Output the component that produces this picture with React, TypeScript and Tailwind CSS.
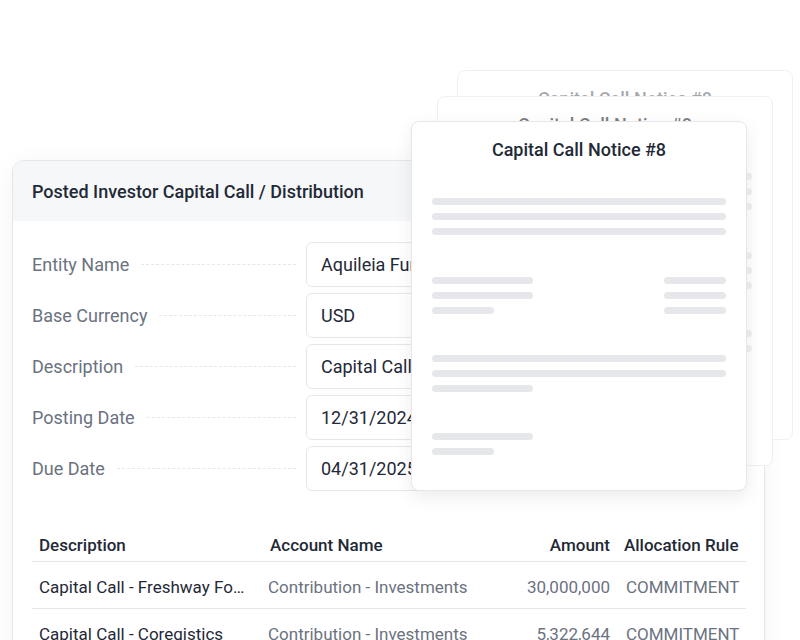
const FIELDS = [
  { label: 'Entity Name', value: 'Aquileia Fund I, L.P.' },
  { label: 'Base Currency', value: 'USD' },
  { label: 'Description', value: 'Capital Call #8' },
  { label: 'Posting Date', value: '12/31/2024' },
  { label: 'Due Date', value: '04/31/2025' },
];

const ROWS = [
  { desc: 'Capital Call - Freshway Foods', account: 'Contribution - Investments', amount: '30,000,000', rule: 'COMMITMENT' },
  { desc: 'Capital Call - Coregistics', account: 'Contribution - Investments', amount: '5,322,644', rule: 'COMMITMENT' },
];

function Bar({ w }: { w: string }) {
  return <div className={`h-[7px] rounded-full bg-[#e5e7eb] ${w}`} />;
}

function NoticeCard({ faded }: { faded?: 'light' | 'lighter' }) {
  const fade = faded === 'lighter' ? 'opacity-40' : faded === 'light' ? 'opacity-60' : '';
  return (
    <div
      className={`w-[336px] h-[370px] rounded-lg bg-white border ${
        faded ? 'border-[#eef0f2]' : 'border-[#e5e7eb] shadow-[0_6px_18px_rgba(0,0,0,0.08)]'
      }`}
    >
      <div className={`px-5 ${fade}`}>
        <div className="pt-[16px] text-center text-[18px] font-medium text-[#1f2a37] leading-6">
          Capital Call Notice #8
        </div>
        <div className="mt-[36px] flex flex-col gap-2">
          <Bar w="w-full" />
          <Bar w="w-full" />
          <Bar w="w-full" />
        </div>
        <div className="mt-[42px] flex justify-between">
          <div className="flex flex-col gap-2">
            <Bar w="w-[101px]" />
            <Bar w="w-[101px]" />
            <Bar w="w-[62px]" />
          </div>
          <div className="flex flex-col gap-2">
            <Bar w="w-[62px]" />
            <Bar w="w-[62px]" />
            <Bar w="w-[62px]" />
          </div>
        </div>
        <div className="mt-[41px] flex flex-col gap-2">
          <Bar w="w-full" />
          <Bar w="w-full" />
          <Bar w="w-[101px]" />
        </div>
        <div className="mt-[41px] flex flex-col gap-2">
          <Bar w="w-[101px]" />
          <Bar w="w-[62px]" />
        </div>
      </div>
    </div>
  );
}

export default function App() {
  return (
    <div
      className="relative w-[800px] h-[640px] overflow-hidden bg-white"
      style={{ fontFamily: 'Roboto, "Noto Sans", sans-serif' }}
    >
      {/* main form card */}
      <div className="ml-3 mt-[160px] w-[753px] rounded-xl border border-[#e5e7eb] bg-white shadow-[0_4px_24px_rgba(0,0,0,0.05)] overflow-hidden">
        <div className="h-[60px] flex items-center px-[19px] bg-[#f6f7f9] text-[18px] font-medium text-[#1f2a37]">
          Posted Investor Capital Call / Distribution
        </div>

        <div className="px-[19px] pt-[21px] flex flex-col gap-[6px]">
          {FIELDS.map((f) => (
            <div key={f.label} className="flex items-center">
              <div className="w-[274px] flex items-center gap-3 pr-[10px]">
                <span className="text-[18px] leading-6 text-[#6b7280] whitespace-nowrap">{f.label}</span>
                <div className="flex-1 border-t border-dashed border-[#e5e7eb]" />
              </div>
              <div className="h-[45px] flex-1 flex items-center px-[14px] rounded-md border border-[#e5e7eb] text-[18px] leading-6 text-[#1f2937] whitespace-nowrap overflow-hidden">
                {f.value}
              </div>
            </div>
          ))}
        </div>

        <table className="mx-[19px] mt-[38px] w-[714px] table-fixed text-[17px] leading-6">
          <thead>
            <tr className="border-b border-[#e5e7eb] text-[#1f2a37] whitespace-nowrap">
              <th className="w-[231px] h-[32px] pt-1 px-[7px] text-left font-medium align-top">Description</th>
              <th className="w-[254px] pt-1 px-[7px] text-left font-medium align-top">Account Name</th>
              <th className="w-[100px] pt-1 px-[7px] text-right font-medium align-top">Amount</th>
              <th className="pt-1 px-[7px] text-left font-medium align-top">Allocation Rule</th>
            </tr>
          </thead>
          <tbody>
            {ROWS.map((r) => (
              <tr key={r.desc} className="border-b border-[#e5e7eb] h-[47px]">
                <td className="pt-[13px] pl-[7px] pr-[14px] align-top text-[#1f2937] truncate">{r.desc}</td>
                <td className="pt-[13px] px-[5px] align-top text-[#6b7280] whitespace-nowrap">{r.account}</td>
                <td className="pt-[13px] px-[7px] align-top text-right text-[#6b7280]">{r.amount}</td>
                <td className="pt-[13px] px-[9px] align-top text-[#6b7280] whitespace-nowrap">{r.rule}</td>
              </tr>
            ))}
          </tbody>
        </table>
        <div className="h-10" />
      </div>

      {/* stacked notice documents */}
      <div className="absolute left-[457px] top-[70px]">
        <NoticeCard faded="lighter" />
      </div>
      <div className="absolute left-[437px] top-[96px]">
        <NoticeCard faded="light" />
      </div>
      <div className="absolute left-[411px] top-[121px]">
        <NoticeCard />
      </div>
    </div>
  );
}
